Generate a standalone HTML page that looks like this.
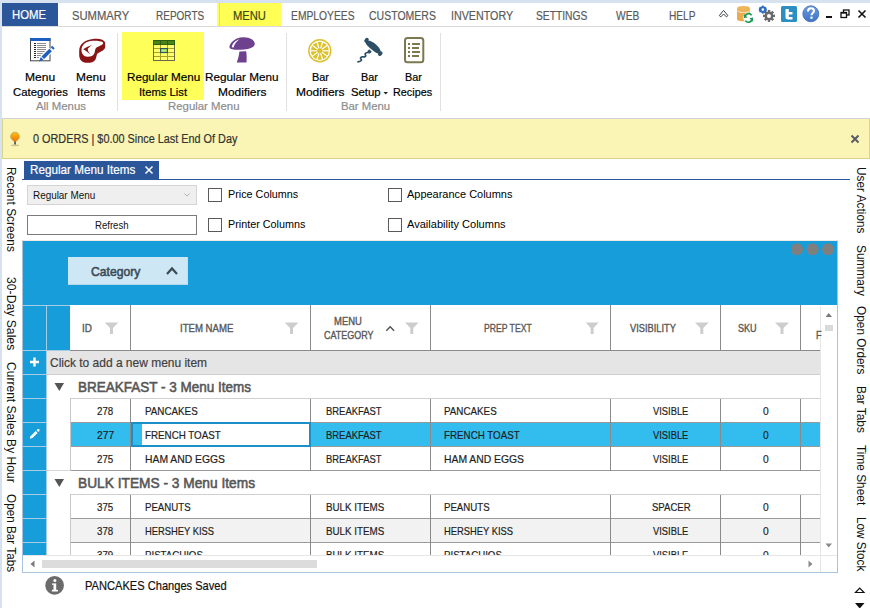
<!DOCTYPE html>
<html><head><meta charset="utf-8"><style>
html,body{margin:0;padding:0;}
body{width:870px;height:608px;position:relative;overflow:hidden;background:#fff;font-family:"Liberation Sans", sans-serif;}
.a{position:absolute;box-sizing:border-box;}
.tx{position:absolute;white-space:nowrap;line-height:0;height:0;transform-origin:0 0;}
.tx span{display:inline-block;line-height:0;-webkit-text-stroke:0.2px currentColor;}
.vt{position:absolute;white-space:nowrap;writing-mode:vertical-rl;line-height:0;width:0;transform-origin:0 0;}
.vt span{display:inline-block;line-height:0;}
svg{position:absolute;overflow:visible;}
.tx.sb span{-webkit-text-stroke:0.55px currentColor;}
.tx.ns span{-webkit-text-stroke:0;}
.tx.sh span{-webkit-text-stroke:0.35px currentColor;}

</style></head><body>
<!-- window borders -->
<div class="a" style="left:0;top:0;width:870px;height:3px;background:#d6e2f0"></div>
<div class="a" style="left:0;top:0;width:2px;height:608px;background:#d6e2f0"></div>
<!-- tab bar -->
<div class="a" style="left:2px;top:26px;width:868px;height:1px;background:#d9d9d9"></div>
<div class="a" style="left:2px;top:3px;width:56px;height:23px;background:#2b579a"></div>
<div class="a" style="left:217px;top:3px;width:64px;height:23px;background:#ffff55"></div>
<div class="a" style="left:219px;top:3px;width:1px;height:23px;background:#e4e44c"></div>
<!-- ribbon separators -->
<div class="a" style="left:117px;top:33px;width:1px;height:78px;background:#e1e1e1"></div>
<div class="a" style="left:286px;top:33px;width:1px;height:78px;background:#e1e1e1"></div>
<div class="a" style="left:440px;top:33px;width:1px;height:78px;background:#e1e1e1"></div>
<!-- yellow highlight -->
<div class="a" style="left:122px;top:32px;width:82px;height:68px;background:#ffff59"></div>
<!-- notification bar -->
<div class="a" style="left:2px;top:118px;width:868px;height:1px;background:#d2d2d6"></div>
<div class="a" style="left:2px;top:119px;width:868px;height:40px;background:#fbf5b5;border:1px solid #d9d48a;border-top:none"></div>
<!-- doc tab -->
<div class="a" style="left:24px;top:161px;width:135px;height:18px;background:#2b579a"></div>
<div class="a" style="left:22px;top:179px;width:828px;height:1px;background:#2b579a"></div>
<!-- combo -->
<div class="a" style="left:27px;top:185px;width:170px;height:20px;background:#efefef;border:1px solid #d4d4d4"></div>
<!-- refresh -->
<div class="a" style="left:27px;top:215px;width:170px;height:20px;background:#fff;border:1px solid #7a7a7a"></div>
<!-- checkboxes -->
<div class="a" style="left:208px;top:188px;width:14px;height:14px;border:1px solid #5a5a5a"></div>
<div class="a" style="left:208px;top:218px;width:14px;height:14px;border:1px solid #5a5a5a"></div>
<div class="a" style="left:388px;top:188px;width:14px;height:14px;border:1px solid #5a5a5a"></div>
<div class="a" style="left:388px;top:218px;width:14px;height:14px;border:1px solid #5a5a5a"></div>

<!-- ===== GRID ===== -->
<div class="a" style="left:22px;top:240px;width:816px;height:333px;border:1px solid #a9c3dc;border-top:1px solid #efe9e4"></div>
<div class="a" style="left:23px;top:241px;width:814px;height:64px;background:#169dda"></div>
<div class="a" style="left:68px;top:257px;width:120px;height:28px;background:#cde7f5;border-bottom:1px solid #b3d6ea;border-right:1px solid #c3e0f0"></div>
<!-- header row -->
<div class="a" style="left:23px;top:305px;width:797px;height:46px;background:#fff;border-bottom:1px solid #8a8a8a"></div>
<div class="a" style="left:23px;top:305px;width:47px;height:250px;background:#169dda"></div>
<div class="a" style="left:46px;top:305px;width:1px;height:250px;background:#a6cde2"></div>
<div class="a" style="left:23px;top:305px;width:47px;height:1px;background:#a6cde2"></div>
<div class="a" style="left:23px;top:350px;width:47px;height:1px;background:#a6cde2"></div>
<!-- header col separators -->
<div class="a" style="left:130px;top:305px;width:1px;height:45px;background:#8a8a8a"></div>
<div class="a" style="left:310px;top:305px;width:1px;height:45px;background:#8a8a8a"></div>
<div class="a" style="left:430px;top:305px;width:1px;height:45px;background:#8a8a8a"></div>
<div class="a" style="left:610px;top:305px;width:1px;height:45px;background:#8a8a8a"></div>
<div class="a" style="left:720px;top:305px;width:1px;height:45px;background:#8a8a8a"></div>
<div class="a" style="left:800px;top:305px;width:1px;height:45px;background:#8a8a8a"></div>
<!-- new row -->
<div class="a" style="left:47px;top:351px;width:773px;height:24px;background:#e5e5e5;border-bottom:1px solid #cfcfcf"></div>
<!-- indicator row lines -->
<div class="a" style="left:23px;top:374px;width:24px;height:1px;background:#a6cde2"></div>
<div class="a" style="left:23px;top:398px;width:24px;height:1px;background:#a6cde2"></div>
<div class="a" style="left:23px;top:422px;width:24px;height:1px;background:#a6cde2"></div>
<div class="a" style="left:23px;top:446px;width:24px;height:1px;background:#a6cde2"></div>
<div class="a" style="left:23px;top:470px;width:24px;height:1px;background:#a6cde2"></div>
<div class="a" style="left:23px;top:494px;width:24px;height:1px;background:#a6cde2"></div>
<div class="a" style="left:23px;top:518px;width:24px;height:1px;background:#a6cde2"></div>
<div class="a" style="left:23px;top:542px;width:24px;height:1px;background:#a6cde2"></div>
<!-- group rows area white from x=47 -->
<div class="a" style="left:47px;top:375px;width:773px;height:180px;background:#fff"></div>
<!-- group header bottom lines -->
<div class="a" style="left:47px;top:470px;width:773px;height:1px;background:#d6d6d6"></div>
<!-- data rows block 1 -->
<div class="a" style="left:70px;top:423px;width:750px;height:24px;background:#33bdee"></div>
<div class="a" style="left:70px;top:519px;width:750px;height:24px;background:#f2f2f2"></div>
<!-- row lines -->
<div class="a" style="left:70px;top:398px;width:750px;height:1px;background:#d0d0d0"></div>
<div class="a" style="left:70px;top:422px;width:750px;height:1px;background:#9a9a9a"></div>
<div class="a" style="left:70px;top:446px;width:750px;height:1px;background:#9a9a9a"></div>
<div class="a" style="left:70px;top:470px;width:750px;height:1px;background:#9a9a9a"></div>
<div class="a" style="left:70px;top:494px;width:750px;height:1px;background:#d0d0d0"></div>
<div class="a" style="left:70px;top:518px;width:750px;height:1px;background:#9a9a9a"></div>
<div class="a" style="left:70px;top:542px;width:750px;height:1px;background:#9a9a9a"></div>
<!-- col lines (data) -->
<div class="a" style="left:70px;top:399px;width:1px;height:72px;background:#c8c8c8"></div>
<div class="a" style="left:70px;top:495px;width:1px;height:60px;background:#c8c8c8"></div>
<div class="a" style="left:130px;top:399px;width:1px;height:72px;background:#8a8a8a"></div>
<div class="a" style="left:130px;top:495px;width:1px;height:60px;background:#8a8a8a"></div>
<div class="a" style="left:310px;top:399px;width:1px;height:72px;background:#8a8a8a"></div>
<div class="a" style="left:310px;top:495px;width:1px;height:60px;background:#8a8a8a"></div>
<div class="a" style="left:430px;top:399px;width:1px;height:72px;background:#8a8a8a"></div>
<div class="a" style="left:430px;top:495px;width:1px;height:60px;background:#8a8a8a"></div>
<div class="a" style="left:610px;top:399px;width:1px;height:72px;background:#8a8a8a"></div>
<div class="a" style="left:610px;top:495px;width:1px;height:60px;background:#8a8a8a"></div>
<div class="a" style="left:720px;top:399px;width:1px;height:72px;background:#8a8a8a"></div>
<div class="a" style="left:720px;top:495px;width:1px;height:60px;background:#8a8a8a"></div>
<div class="a" style="left:800px;top:399px;width:1px;height:72px;background:#8a8a8a"></div>
<div class="a" style="left:800px;top:495px;width:1px;height:60px;background:#8a8a8a"></div>
<!-- selected cell editor -->
<div class="a" style="left:131px;top:422px;width:180px;height:25px;border:2px solid #1b8fc8;background:#33bdee"></div>
<div class="a" style="left:142px;top:424px;width:167px;height:21px;background:#fff"></div>
<!-- vertical scrollbar -->
<div class="a" style="left:820px;top:306px;width:17px;height:249px;background:#fff;border-left:1px solid #e6e6e6"></div>
<div class="a" style="left:825px;top:325px;width:8px;height:6px;background:#dadada"></div>
<svg style="left:0;top:0" width="870" height="608">
  <polygon points="825.5,317 828.7,313 832,317" fill="#7a7a7a"/>
  <polygon points="825.5,543.5 828.7,547.5 832,543.5" fill="#8a8a8a"/>
</svg>
<!-- horizontal scrollbar -->
<div class="a" style="left:23px;top:555px;width:814px;height:17px;background:#fff;border-top:1px solid #e6e6e6"></div>
<div class="a" style="left:820px;top:555px;width:1px;height:17px;background:#e6e6e6"></div>
<div class="a" style="left:42px;top:560px;width:275px;height:8px;background:#dcdcdc"></div>
<svg style="left:0;top:0" width="870" height="608">
  <polygon points="34.5,560.5 30.5,564 34.5,567.5" fill="#7a7a7a"/>
  <polygon points="808.5,560.5 812.5,564 808.5,567.5" fill="#8a8a8a"/>
</svg>

<!-- ===== ICONS ===== -->
<svg style="left:0;top:0" width="870" height="608">
  <!-- menu categories doc -->
  <rect x="30.5" y="38.5" width="19.5" height="22.3" fill="#fff" stroke="#454545" stroke-width="1"/>
  <rect x="30" y="38" width="20.5" height="3" fill="#1e5ebf"/>
  <g fill="#222">
    <rect x="34" y="43" width="2" height="1"/><rect x="34" y="45" width="2" height="1"/><rect x="34" y="47" width="2" height="1"/><rect x="34" y="49" width="2" height="1"/>
    <rect x="34" y="51" width="2" height="1"/><rect x="34" y="53" width="2" height="1"/><rect x="34" y="55" width="2" height="1"/><rect x="34" y="57" width="2" height="1"/>
  </g>
  <g fill="#8c8c8c">
    <rect x="37" y="43" width="9" height="1"/><rect x="37" y="45" width="9" height="1"/><rect x="37" y="47" width="9" height="1"/><rect x="37" y="49" width="9" height="1"/>
    <rect x="37" y="51" width="8" height="1"/><rect x="37" y="53" width="6" height="1"/><rect x="37" y="55" width="4" height="1"/><rect x="37" y="57" width="2" height="1"/>
  </g>
  <line x1="42.5" y1="58" x2="51" y2="49.5" stroke="#fff" stroke-width="6"/>
  <line x1="42.8" y1="57.7" x2="50.6" y2="49.9" stroke="#1e5ebf" stroke-width="3.6"/>
  <polygon points="39,61.5 40.8,57 43.5,59.7" fill="#1e5ebf"/>
  <line x1="52" y1="48.4" x2="53.4" y2="47" stroke="#1e5ebf" stroke-width="3.6"/>
  <!-- steak -->
  <path d="M79.2,51 C79.2,44 85,39.5 93,38.9 C99,38.5 105,39.5 105.2,43.5 L105.2,47 C105,50 101,51.5 97.5,53.5 C96.5,54.5 96.5,57.5 95.5,59.5 C93.5,62.5 90,63 86,62.8 C81.5,62.5 79.2,59 79.2,55 Z" fill="#8a1414"/>
  <path d="M81.5,50 C81.5,44.5 86.5,41 93,40.8 C99,40.5 103.5,41.5 103.2,43.3 C102.8,45 99,46 96.5,47.5 C95,48.5 95,51 94.5,53 C93.5,56 90.5,56.8 87.5,56.7 C83.5,56.5 81.5,54 81.5,50 Z" fill="#fff"/>
  <path d="M92,45 C88.5,46 85,48 83.2,49.3 C85.5,50.5 88,52.5 90.3,54.6 C88.5,52 87.5,50 87.8,48.8 C89,47.3 90.5,46 92,45 Z" fill="#8a1414"/>
  <!-- table icon -->
  <rect x="153.5" y="40.5" width="21" height="20" fill="#ffff72" stroke="#6a6848" stroke-width="1"/>
  <rect x="153" y="40" width="22" height="5" fill="#2c5f10"/>
  <rect x="154" y="41" width="20" height="3" fill="#4a8418"/>
  <g stroke="#2c5f10" stroke-width="1"><line x1="160.5" y1="41" x2="160.5" y2="44"/><line x1="167.5" y1="41" x2="167.5" y2="44"/></g>
  <g stroke="#a8a21c" stroke-width="1">
    <line x1="154" y1="48.5" x2="174" y2="48.5"/><line x1="154" y1="52.5" x2="174" y2="52.5"/><line x1="154" y1="56.5" x2="174" y2="56.5"/>
    <line x1="160.5" y1="45" x2="160.5" y2="60"/><line x1="167.5" y1="45" x2="167.5" y2="60"/>
  </g>
  <rect x="160.6" y="48.6" width="6.8" height="3.9" fill="#b6ee6e" stroke="#2f5560" stroke-width="1.2"/>
  <!-- mushroom -->
  <path d="M229.5,47.5 C229,43.5 235,37.5 243,37.3 C250,37.1 255,40.5 254.8,44 C254.6,47.5 249,49.5 241,49.8 C235,50 229.8,49.5 229.5,47.5 Z" fill="#6e418e"/>
  <path d="M231.8,47.2 C232.3,43.5 235.5,40.5 239.5,39 C236.5,41.5 234.5,44 233.6,47.4 Z" fill="#fff"/>
  <path d="M239.4,51.5 L246.2,51.3 C246.8,55 246.8,59 246.5,62.6 L236.7,62.6 C238,59.5 239,55.5 239.4,51.5 Z" fill="#6e418e"/>
  <!-- lemon -->
  <circle cx="319.8" cy="50.8" r="11.7" fill="#dcc02c"/>
  <circle cx="319.8" cy="50.8" r="10.2" fill="#fff"/>
  <circle cx="319.8" cy="50.8" r="9" fill="#dcc02c"/>
  <g stroke="#fff" stroke-width="1.2">
    <line x1="320.60" y1="48.33" x2="322.74" y2="41.76"/>
    <line x1="321.90" y1="49.27" x2="327.49" y2="45.22"/>
    <line x1="322.40" y1="50.80" x2="329.30" y2="50.80"/>
    <line x1="321.90" y1="52.33" x2="327.49" y2="56.38"/>
    <line x1="320.60" y1="53.27" x2="322.74" y2="59.84"/>
    <line x1="319.00" y1="53.27" x2="316.86" y2="59.84"/>
    <line x1="317.70" y1="52.33" x2="312.11" y2="56.38"/>
    <line x1="317.20" y1="50.80" x2="310.30" y2="50.80"/>
    <line x1="317.70" y1="49.27" x2="312.11" y2="45.22"/>
    <line x1="319.00" y1="48.33" x2="316.86" y2="41.76"/>
  </g>
  <!-- corkscrew -->
  <g fill="#2c4f66">
    <path d="M366,41.2 C368,39.5 372.5,41.5 376.5,45 C380,48 381.5,51.5 380,53 C378.5,54.5 375,52.5 371,49 C367,45.5 364.5,43 366,41.2 Z"/>
    <ellipse cx="366.5" cy="40.2" rx="2.6" ry="1.9" transform="rotate(-47 366.5 40.2)"/>
    <ellipse cx="380.3" cy="53.6" rx="2.6" ry="1.9" transform="rotate(-47 380.3 53.6)"/>
    <rect x="367.8" y="50" width="3.4" height="3" transform="rotate(45 369.5 51.5)"/>
  </g>
  <path d="M368.3,52.6 C366.5,52.2 364.3,53.5 365.5,55 C366.5,56.3 364.5,57.3 363,56.8 C361.2,56.5 359.6,58.2 361.2,59.4 C362.3,60.3 360,61.6 358,61.8" stroke="#2c4f66" stroke-width="1.7" fill="none" stroke-linecap="round"/>
  <!-- recipes doc -->
  <rect x="405" y="38" width="18.3" height="24.3" rx="2.5" fill="#fff" stroke="#7e7850" stroke-width="2"/>
  <g fill="#7e7850">
    <rect x="408" y="43" width="2" height="2"/><rect x="412" y="43" width="8" height="2"/>
    <rect x="408" y="47" width="2" height="2"/><rect x="412" y="47" width="7" height="2"/>
    <rect x="408" y="51" width="2" height="2"/><rect x="412" y="51" width="8" height="2"/>
    <rect x="408" y="55" width="2" height="2"/><rect x="412" y="55" width="7" height="2"/>
  </g>
  <!-- setup dropdown arrow -->
  <polygon points="383.5,92 388,92 385.75,94.5" fill="#222"/>

  <!-- top right icons -->
  <path d="M719.3,15.6 L723.6,10.4 L727.9,15.6 L726.4,16.9 L723.6,14 L720.8,16.9 Z" fill="#fff" stroke="#3a3f44" stroke-width="1" stroke-linejoin="round"/>
  <!-- database -->
  <path d="M737,8.5 L737,19 C737,20.5 740,21.3 743.5,21.3 C747,21.3 750,20.5 750,19 L750,8.5 Z" fill="#e9ab4d"/>
  <ellipse cx="743.5" cy="8.3" rx="6.5" ry="2.4" fill="#eeb55c"/>
  <path d="M737,10 C737,11.6 740,12.4 743.5,12.4 C747,12.4 750,11.6 750,10" fill="none" stroke="#fff3da" stroke-width="0.9"/>
  <circle cx="748.5" cy="17.8" r="5.2" fill="#fff"/>
  <path d="M745,17 A3.6,3.6 0 0 1 751.6,15.2" fill="none" stroke="#1b9a55" stroke-width="1.7"/>
  <path d="M752,18.8 A3.6,3.6 0 0 1 745.4,20.6" fill="none" stroke="#1b9a55" stroke-width="1.7"/>
  <polygon points="744,14 744,18 747.5,17.5" fill="#1b9a55"/>
  <polygon points="753,21.8 753,17.6 749.5,18.2" fill="#1b9a55"/>
  <!-- gears -->
  <g transform="translate(769,15.9)">
    <circle r="4.3" fill="#6a6a6a"/>
    <g fill="#6a6a6a">
      <rect x="-1.2" y="-6" width="2.4" height="12"/><rect x="-6" y="-1.2" width="12" height="2.4"/>
      <rect x="-1.2" y="-6" width="2.4" height="12" transform="rotate(45)"/><rect x="-6" y="-1.2" width="12" height="2.4" transform="rotate(45)"/>
    </g>
    <circle r="2" fill="#fff"/>
  </g>
  <g transform="translate(762.8,9.6)">
    <circle r="2.6" fill="none" stroke="#2d6cc0" stroke-width="1.5"/>
    <g fill="#2d6cc0">
      <rect x="-0.9" y="-4" width="1.8" height="8"/><rect x="-4" y="-0.9" width="8" height="1.8"/>
      <rect x="-0.9" y="-4" width="1.8" height="8" transform="rotate(60)"/><rect x="-0.9" y="-4" width="1.8" height="8" transform="rotate(120)"/>
    </g>
    <circle r="1.3" fill="#fff"/>
  </g>
  <!-- twitter -->
  <rect x="781" y="6" width="16" height="16" rx="1.5" fill="#2b8fc2"/>
  <path d="M785.5,9 L785.5,17 C785.5,18.8 786.5,19.5 788.5,19.5 L792.5,19.5 L792.5,17 L788.8,17 L788.8,14.5 L792.5,14.5 L792.5,12 L788.8,12 L788.8,9 Z" fill="#fff"/>
  <!-- help -->
  <circle cx="810.8" cy="13.8" r="8" fill="url(#hg1)"/>
  <circle cx="810.8" cy="13.8" r="8" fill="none" stroke="#3b6db8" stroke-width="0.8"/>
  <path d="M808,11.5 C808,9.3 809.5,8.3 811,8.3 C812.8,8.3 814,9.5 814,11 C814,13 811.5,13.2 811.5,15.2" fill="none" stroke="#fff" stroke-width="2"/>
  <rect x="810.4" y="16.6" width="2.2" height="2.2" fill="#fff"/>
  <!-- minimize -->
  <rect x="826" y="16" width="6" height="2" fill="#111"/>
  <!-- restore -->
  <rect x="843.5" y="10" width="5.5" height="5" fill="none" stroke="#111" stroke-width="1.3"/>
  <rect x="841" y="12.5" width="5.5" height="5" fill="#fff" stroke="#111" stroke-width="1.3"/>
  <rect x="841" y="12" width="5.5" height="1.6" fill="#111"/>
  <!-- close -->
  <path d="M858.5,10.5 L865.5,17.5 M865.5,10.5 L858.5,17.5" stroke="#111" stroke-width="1.6"/>

  <!-- bulb -->
  <defs><linearGradient id="bg1" x1="0" y1="0" x2="0" y2="1"><stop offset="0" stop-color="#fcc20e"/><stop offset="1" stop-color="#f26f0c"/></linearGradient>
  <linearGradient id="hg1" x1="0" y1="0" x2="0" y2="1"><stop offset="0" stop-color="#6a9be0"/><stop offset="1" stop-color="#3f73c4"/></linearGradient></defs>
  <ellipse cx="15" cy="145.3" rx="4.2" ry="0.9" fill="#c9c291"/>
  <rect x="14.1" y="140.5" width="1.9" height="4" fill="#596063"/>
  <path d="M15,132.2 C17.6,132.2 19.4,134.2 19.4,136.7 C19.4,138.8 17.3,140.2 15,142 C12.7,140.2 10.6,138.8 10.6,136.7 C10.6,134.2 12.4,132.2 15,132.2 Z" fill="url(#bg1)" stroke="#9c8a50" stroke-width="0.5"/>
  <!-- notification close -->
  <path d="M851.5,135.5 L858.5,142.5 M858.5,135.5 L851.5,142.5" stroke="#575b66" stroke-width="2"/>
  <!-- doc tab close -->
  <path d="M145.5,166.5 L152.5,173.5 M152.5,166.5 L145.5,173.5" stroke="#fff" stroke-width="1.5"/>
  <!-- combo chevron -->
  <path d="M184.5,193.5 L187,196 L189.5,193.5" fill="none" stroke="#b0b0b0" stroke-width="1"/>

  <!-- grid circles -->
  <circle cx="797" cy="249.3" r="6" fill="#7f7f7f"/>
  <circle cx="812.6" cy="249.3" r="6" fill="#7f7f7f"/>
  <circle cx="828" cy="249.3" r="6" fill="#7f7f7f"/>
  <!-- category chevron -->
  <path d="M167,274 L172,268.5 L177,274" fill="none" stroke="#3c4a56" stroke-width="2.2"/>
  <!-- filter icons -->
  <g fill="#cdcdcd">
    <path d="M104.8,322.5 L118.3,322.5 L113,328 L113,334 L110,334 L110,328 Z"/>
    <path d="M284.7,322.5 L298.5,322.5 L293,328 L293,334 L290,334 L290,328 Z"/>
    <path d="M405,322.5 L418.6,322.5 L413.3,328 L413.3,334 L410.3,334 L410.3,328 Z"/>
    <path d="M585.7,322.5 L598.6,322.5 L593.6,328 L593.6,334 L590.6,334 L590.6,328 Z"/>
    <path d="M695,322.5 L708.7,322.5 L703.3,328 L703.3,334 L700.3,334 L700.3,328 Z"/>
    <path d="M775,322.5 L789,322.5 L783.5,328 L783.5,334 L780.5,334 L780.5,328 Z"/>
  </g>
  <!-- sort chevron -->
  <path d="M386.3,330.8 L390.2,326.8 L394.1,330.8" fill="none" stroke="#555" stroke-width="1.5"/>
  <!-- plus -->
  <path d="M34.5,357.5 L34.5,366.5 M30,362 L39,362" stroke="#fff" stroke-width="2.4"/>
  <!-- pencil -->
  <path d="M29.8,438.8 L30.5,436.2 L35.7,431 L37.6,432.9 L32.4,438.1 Z" fill="#fff"/>
  <path d="M36.5,430.2 L37.5,429.2 C38.1,428.7 38.8,428.9 39.2,429.3 C39.6,429.7 39.8,430.4 39.3,431 L38.3,432 Z" fill="#fff"/>
  <!-- group triangles -->
  <polygon points="54.5,383 64,383 59.3,391" fill="#555"/>
  <polygon points="54.5,479 64,479 59.3,487" fill="#555"/>
  <!-- info icon -->
  <circle cx="54.6" cy="585.4" r="9.3" fill="#6b6b6b"/>
  <rect x="53.5" y="583.4" width="2.7" height="7.5" fill="#fff"/>
  <rect x="51.9" y="589.8" width="6" height="1.7" fill="#fff"/>
  <rect x="52.1" y="583.4" width="1.6" height="1.5" fill="#fff"/>
  <circle cx="54.9" cy="580.6" r="1.5" fill="#fff"/>
  <!-- right bottom triangles -->
  <polygon points="855.5,592.5 859.7,588 864,592.5" fill="#fff" stroke="#111" stroke-width="1.2"/>
  <polygon points="855,603 864.5,603 859.7,608.5" fill="#111"/>
</svg>

<div class="tx" style="left:12.40px;top:14.67px;font-size:12.5px;color:#ffffff;font-weight:400;transform:scaleX(0.9079);"><span>HOME</span></div>
<div class="tx" style="left:72.00px;top:15.57px;font-size:12.5px;color:#5a5a5a;font-weight:400;transform:scaleX(0.8984);"><span>SUMMARY</span></div>
<div class="tx" style="left:155.70px;top:15.57px;font-size:12.5px;color:#5a5a5a;font-weight:400;transform:scaleX(0.8000);"><span>REPORTS</span></div>
<div class="tx" style="left:233.40px;top:15.57px;font-size:12.5px;color:#3b4612;font-weight:400;transform:scaleX(0.8946);"><span>MENU</span></div>
<div class="tx" style="left:290.50px;top:15.57px;font-size:12.5px;color:#5a5a5a;font-weight:400;transform:scaleX(0.8247);"><span>EMPLOYEES</span></div>
<div class="tx" style="left:368.80px;top:15.57px;font-size:12.5px;color:#5a5a5a;font-weight:400;transform:scaleX(0.8400);"><span>CUSTOMERS</span></div>
<div class="tx" style="left:450.50px;top:15.57px;font-size:12.5px;color:#5a5a5a;font-weight:400;transform:scaleX(0.8562);"><span>INVENTORY</span></div>
<div class="tx" style="left:536.20px;top:15.57px;font-size:12.5px;color:#5a5a5a;font-weight:400;transform:scaleX(0.8222);"><span>SETTINGS</span></div>
<div class="tx" style="left:616.00px;top:15.57px;font-size:12.5px;color:#5a5a5a;font-weight:400;transform:scaleX(0.8172);"><span>WEB</span></div>
<div class="tx" style="left:669.40px;top:15.57px;font-size:12.5px;color:#5a5a5a;font-weight:400;transform:scaleX(0.8121);"><span>HELP</span></div>
<div class="tx" style="left:25.40px;top:77.22px;font-size:11.5px;color:#000000;font-weight:400;transform:scaleX(1.0483);"><span>Menu</span></div>
<div class="tx" style="left:12.60px;top:92.12px;font-size:11.5px;color:#000000;font-weight:400;transform:scaleX(0.9857);"><span>Categories</span></div>
<div class="tx" style="left:76.40px;top:77.22px;font-size:11.5px;color:#000000;font-weight:400;transform:scaleX(1.0345);"><span>Menu</span></div>
<div class="tx" style="left:77.40px;top:92.12px;font-size:11.5px;color:#000000;font-weight:400;transform:scaleX(1.0107);"><span>Items</span></div>
<div class="tx" style="left:36.00px;top:106.32px;font-size:11.5px;color:#8d8d8d;font-weight:400;transform:scaleX(0.9882);"><span>All Menus</span></div>
<div class="tx" style="left:126.80px;top:77.22px;font-size:11.5px;color:#000000;font-weight:400;transform:scaleX(1.0125);"><span>Regular Menu</span></div>
<div class="tx" style="left:138.60px;top:92.12px;font-size:11.5px;color:#000000;font-weight:400;transform:scaleX(0.9760);"><span>Items List</span></div>
<div class="tx" style="left:205.00px;top:77.22px;font-size:11.5px;color:#000000;font-weight:400;transform:scaleX(1.0181);"><span>Regular Menu</span></div>
<div class="tx" style="left:217.70px;top:92.12px;font-size:11.5px;color:#000000;font-weight:400;transform:scaleX(1.0383);"><span>Modifiers</span></div>
<div class="tx" style="left:167.90px;top:106.32px;font-size:11.5px;color:#8d8d8d;font-weight:400;transform:scaleX(0.9903);"><span>Regular Menu</span></div>
<div class="tx" style="left:312.40px;top:77.22px;font-size:11.5px;color:#000000;font-weight:400;transform:scaleX(0.9500);"><span>Bar</span></div>
<div class="tx" style="left:295.70px;top:92.12px;font-size:11.5px;color:#000000;font-weight:400;transform:scaleX(1.0404);"><span>Modifiers</span></div>
<div class="tx" style="left:361.00px;top:77.22px;font-size:11.5px;color:#000000;font-weight:400;transform:scaleX(0.9444);"><span>Bar</span></div>
<div class="tx" style="left:350.50px;top:92.12px;font-size:11.5px;color:#000000;font-weight:400;transform:scaleX(0.9833);"><span>Setup</span></div>
<div class="tx" style="left:405.00px;top:77.22px;font-size:11.5px;color:#000000;font-weight:400;transform:scaleX(0.9444);"><span>Bar</span></div>
<div class="tx" style="left:393.40px;top:92.12px;font-size:11.5px;color:#000000;font-weight:400;transform:scaleX(0.9405);"><span>Recipes</span></div>
<div class="tx" style="left:340.70px;top:106.32px;font-size:11.5px;color:#8d8d8d;font-weight:400;transform:scaleX(0.9860);"><span>Bar Menu</span></div>
<div class="tx" style="left:33.00px;top:138.87px;font-size:12.5px;color:#333333;font-weight:400;transform:scaleX(0.8686);"><span>0 ORDERS | $0.00 Since Last End Of Day</span></div>
<div class="tx" style="left:30.30px;top:169.67px;font-size:12.5px;color:#ffffff;font-weight:400;transform:scaleX(0.9354);"><span>Regular Menu Items</span></div>
<div class="tx ns" style="left:33.30px;top:195.19px;font-size:11px;color:#111;font-weight:400;transform:scaleX(0.9000);"><span>Regular Menu</span></div>
<div class="tx ns" style="left:94.70px;top:224.99px;font-size:11px;color:#111;font-weight:400;transform:scaleX(0.8718);"><span>Refresh</span></div>
<div class="tx ns" style="left:227.60px;top:194.02px;font-size:11.5px;color:#000;font-weight:400;transform:scaleX(0.9387);"><span>Price Columns</span></div>
<div class="tx ns" style="left:227.60px;top:224.02px;font-size:11.5px;color:#000;font-weight:400;transform:scaleX(0.9386);"><span>Printer Columns</span></div>
<div class="tx ns" style="left:407.00px;top:194.02px;font-size:11.5px;color:#000;font-weight:400;transform:scaleX(0.9532);"><span>Appearance Columns</span></div>
<div class="tx ns" style="left:407.00px;top:224.02px;font-size:11.5px;color:#000;font-weight:400;transform:scaleX(0.9602);"><span>Availability Columns</span></div>
<div class="tx sb" style="left:90.80px;top:271.50px;font-size:13px;color:#3c4a56;font-weight:400;transform:scaleX(0.9358);"><span>Category</span></div>
<div class="tx sh" style="left:82.40px;top:328.84px;font-size:10px;color:#585858;font-weight:400;transform:scaleX(0.9900);"><span>ID</span></div>
<div class="tx sh" style="left:180.40px;top:328.84px;font-size:10px;color:#585858;font-weight:400;transform:scaleX(0.9607);"><span>ITEM NAME</span></div>
<div class="tx sh" style="left:334.30px;top:322.04px;font-size:10px;color:#585858;font-weight:400;transform:scaleX(0.9467);"><span>MENU</span></div>
<div class="tx sh" style="left:323.80px;top:335.54px;font-size:10px;color:#585858;font-weight:400;transform:scaleX(0.8964);"><span>CATEGORY</span></div>
<div class="tx sh" style="left:483.70px;top:328.84px;font-size:10px;color:#585858;font-weight:400;transform:scaleX(0.8636);"><span>PREP TEXT</span></div>
<div class="tx sh" style="left:629.80px;top:328.84px;font-size:10px;color:#585858;font-weight:400;transform:scaleX(0.9265);"><span>VISIBILITY</span></div>
<div class="tx sh" style="left:738.00px;top:328.84px;font-size:10px;color:#585858;font-weight:400;transform:scaleX(0.9048);"><span>SKU</span></div>
<div class="tx sh" style="left:815.50px;top:335.54px;font-size:10px;color:#585858;font-weight:400;transform:scaleX(0.9167);"><span>F</span></div>
<div class="tx" style="left:50.00px;top:362.50px;font-size:13px;color:#404040;font-weight:400;transform:scaleX(0.9211);"><span>Click to add a new menu item</span></div>
<div class="tx sb" style="left:78.00px;top:387.05px;font-size:14px;color:#575757;font-weight:400;transform:scaleX(0.9639);"><span>BREAKFAST - 3 Menu Items</span></div>
<div class="tx sb" style="left:78.00px;top:483.05px;font-size:14px;color:#575757;font-weight:400;transform:scaleX(0.9807);"><span>BULK ITEMS - 3 Menu Items</span></div>
<div class="tx" style="left:85.30px;top:585.50px;font-size:13px;color:#111;font-weight:400;transform:scaleX(0.8536);"><span>PANCAKES Changes Saved</span></div>
<div class="a" style="left:0;top:0;width:870px;height:555px;overflow:hidden"><div class="tx" style="left:97.20px;top:411.19px;font-size:11px;color:#1e1e1e;font-weight:400;transform:scaleX(0.8842);"><span>278</span></div>
<div class="tx" style="left:144.60px;top:411.19px;font-size:11px;color:#1e1e1e;font-weight:400;transform:scaleX(0.8915);"><span>PANCAKES</span></div>
<div class="tx" style="left:326.00px;top:411.19px;font-size:11px;color:#1e1e1e;font-weight:400;transform:scaleX(0.8585);"><span>BREAKFAST</span></div>
<div class="tx" style="left:444.10px;top:411.19px;font-size:11px;color:#1e1e1e;font-weight:400;transform:scaleX(0.8915);"><span>PANCAKES</span></div>
<div class="tx" style="left:652.95px;top:411.19px;font-size:11px;color:#1e1e1e;font-weight:400;transform:scaleX(0.8500);"><span>VISIBLE</span></div>
<div class="tx" style="left:762.81px;top:411.19px;font-size:11px;color:#1e1e1e;font-weight:400;transform:scaleX(0.9300);"><span>0</span></div>
<div class="tx" style="left:97.20px;top:435.19px;font-size:11px;color:#1e1e1e;font-weight:400;transform:scaleX(0.9333);"><span>277</span></div>
<div class="tx" style="left:144.60px;top:435.19px;font-size:11px;color:#1e1e1e;font-weight:400;transform:scaleX(0.8894);"><span>FRENCH TOAST</span></div>
<div class="tx" style="left:326.00px;top:435.19px;font-size:11px;color:#1e1e1e;font-weight:400;transform:scaleX(0.8585);"><span>BREAKFAST</span></div>
<div class="tx" style="left:444.10px;top:435.19px;font-size:11px;color:#1e1e1e;font-weight:400;transform:scaleX(0.8894);"><span>FRENCH TOAST</span></div>
<div class="tx" style="left:652.95px;top:435.19px;font-size:11px;color:#1e1e1e;font-weight:400;transform:scaleX(0.8500);"><span>VISIBLE</span></div>
<div class="tx" style="left:762.81px;top:435.19px;font-size:11px;color:#1e1e1e;font-weight:400;transform:scaleX(0.9300);"><span>0</span></div>
<div class="tx" style="left:97.20px;top:459.19px;font-size:11px;color:#1e1e1e;font-weight:400;transform:scaleX(0.8842);"><span>275</span></div>
<div class="tx" style="left:144.60px;top:459.19px;font-size:11px;color:#1e1e1e;font-weight:400;transform:scaleX(0.9412);"><span>HAM AND EGGS</span></div>
<div class="tx" style="left:326.00px;top:459.19px;font-size:11px;color:#1e1e1e;font-weight:400;transform:scaleX(0.8585);"><span>BREAKFAST</span></div>
<div class="tx" style="left:444.10px;top:459.19px;font-size:11px;color:#1e1e1e;font-weight:400;transform:scaleX(0.9412);"><span>HAM AND EGGS</span></div>
<div class="tx" style="left:652.95px;top:459.19px;font-size:11px;color:#1e1e1e;font-weight:400;transform:scaleX(0.8500);"><span>VISIBLE</span></div>
<div class="tx" style="left:762.81px;top:459.19px;font-size:11px;color:#1e1e1e;font-weight:400;transform:scaleX(0.9300);"><span>0</span></div>
<div class="tx" style="left:97.20px;top:507.19px;font-size:11px;color:#1e1e1e;font-weight:400;transform:scaleX(0.8842);"><span>375</span></div>
<div class="tx" style="left:144.60px;top:507.19px;font-size:11px;color:#1e1e1e;font-weight:400;transform:scaleX(0.8769);"><span>PEANUTS</span></div>
<div class="tx" style="left:326.00px;top:507.19px;font-size:11px;color:#1e1e1e;font-weight:400;transform:scaleX(0.8908);"><span>BULK ITEMS</span></div>
<div class="tx" style="left:444.10px;top:507.19px;font-size:11px;color:#1e1e1e;font-weight:400;transform:scaleX(0.8769);"><span>PEANUTS</span></div>
<div class="tx" style="left:651.70px;top:507.19px;font-size:11px;color:#1e1e1e;font-weight:400;transform:scaleX(0.8682);"><span>SPACER</span></div>
<div class="tx" style="left:762.81px;top:507.19px;font-size:11px;color:#1e1e1e;font-weight:400;transform:scaleX(0.9300);"><span>0</span></div>
<div class="tx" style="left:97.20px;top:531.19px;font-size:11px;color:#1e1e1e;font-weight:400;transform:scaleX(0.8842);"><span>378</span></div>
<div class="tx" style="left:144.60px;top:531.19px;font-size:11px;color:#1e1e1e;font-weight:400;transform:scaleX(0.8519);"><span>HERSHEY KISS</span></div>
<div class="tx" style="left:326.00px;top:531.19px;font-size:11px;color:#1e1e1e;font-weight:400;transform:scaleX(0.8908);"><span>BULK ITEMS</span></div>
<div class="tx" style="left:444.10px;top:531.19px;font-size:11px;color:#1e1e1e;font-weight:400;transform:scaleX(0.8519);"><span>HERSHEY KISS</span></div>
<div class="tx" style="left:652.95px;top:531.19px;font-size:11px;color:#1e1e1e;font-weight:400;transform:scaleX(0.8500);"><span>VISIBLE</span></div>
<div class="tx" style="left:762.81px;top:531.19px;font-size:11px;color:#1e1e1e;font-weight:400;transform:scaleX(0.9300);"><span>0</span></div>
<div class="tx" style="left:97.20px;top:555.19px;font-size:11px;color:#1e1e1e;font-weight:400;transform:scaleX(0.8842);"><span>379</span></div>
<div class="tx" style="left:144.60px;top:555.19px;font-size:11px;color:#1e1e1e;font-weight:400;transform:scaleX(0.8788);"><span>PISTACHIOS</span></div>
<div class="tx" style="left:326.00px;top:555.19px;font-size:11px;color:#1e1e1e;font-weight:400;transform:scaleX(0.8908);"><span>BULK ITEMS</span></div>
<div class="tx" style="left:444.10px;top:555.19px;font-size:11px;color:#1e1e1e;font-weight:400;transform:scaleX(0.8788);"><span>PISTACHIOS</span></div>
<div class="tx" style="left:652.95px;top:555.19px;font-size:11px;color:#1e1e1e;font-weight:400;transform:scaleX(0.8500);"><span>VISIBLE</span></div>
<div class="tx" style="left:762.81px;top:555.19px;font-size:11px;color:#1e1e1e;font-weight:400;transform:scaleX(0.9300);"><span>0</span></div></div>
<div class="vt" style="left:11.40px;top:166.60px;font-size:13px;color:#111;transform:scaleY(0.9183);"><span>Recent Screens</span></div>
<div class="vt" style="left:11.40px;top:277.20px;font-size:13px;color:#111;transform:scaleY(0.9385);"><span>30-Day Sales</span></div>
<div class="vt" style="left:11.40px;top:362.20px;font-size:13px;color:#111;transform:scaleY(0.9277);"><span>Current Sales By Hour</span></div>
<div class="vt" style="left:11.40px;top:494.00px;font-size:13px;color:#111;transform:scaleY(0.9034);"><span>Open Bar Tabs</span></div>
<div class="vt" style="left:860.50px;top:166.50px;font-size:13px;color:#111;transform:scaleY(0.9110);"><span>User Actions</span></div>
<div class="vt" style="left:860.50px;top:244.50px;font-size:13px;color:#111;transform:scaleY(0.9143);"><span>Summary</span></div>
<div class="vt" style="left:860.50px;top:306.00px;font-size:13px;color:#111;transform:scaleY(0.9107);"><span>Open Orders</span></div>
<div class="vt" style="left:860.50px;top:385.60px;font-size:13px;color:#111;transform:scaleY(0.9196);"><span>Bar Tabs</span></div>
<div class="vt" style="left:860.50px;top:444.50px;font-size:13px;color:#111;transform:scaleY(0.9119);"><span>Time Sheet</span></div>
<div class="vt" style="left:860.50px;top:516.90px;font-size:13px;color:#111;transform:scaleY(0.9050);"><span>Low Stock</span></div>
</body></html>
